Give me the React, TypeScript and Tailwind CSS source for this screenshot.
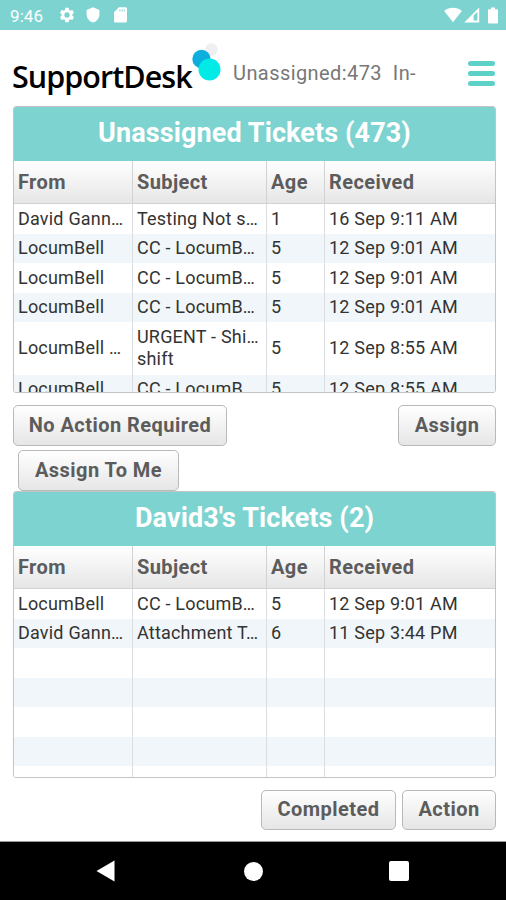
import React from 'react';

interface Ticket {
  from: string;
  subject: string;
  age: string;
  received: string;
  tall?: boolean;
}

const unassigned: Ticket[] = [
  { from: 'David Gann…', subject: 'Testing Not s…', age: '1', received: '16 Sep 9:11 AM' },
  { from: 'LocumBell', subject: 'CC - LocumB…', age: '5', received: '12 Sep 9:01 AM' },
  { from: 'LocumBell', subject: 'CC - LocumB…', age: '5', received: '12 Sep 9:01 AM' },
  { from: 'LocumBell', subject: 'CC - LocumB…', age: '5', received: '12 Sep 9:01 AM' },
  { from: 'LocumBell …', subject: 'URGENT - Shi…\nshift', age: '5', received: '12 Sep 8:55 AM', tall: true },
  { from: 'LocumBell', subject: 'CC - LocumB…', age: '5', received: '12 Sep 8:55 AM' },
];

const empty: Ticket = { from: '', subject: '', age: '', received: '' };

const mine: Ticket[] = [
  { from: 'LocumBell', subject: 'CC - LocumB…', age: '5', received: '12 Sep 9:01 AM' },
  { from: 'David Gann…', subject: 'Attachment T…', age: '6', received: '11 Sep 3:44 PM' },
  empty,
  empty,
  empty,
  empty,
  empty,
];

const columns = 'grid grid-cols-[119px_134px_58px_1fr]';

const StatusBar = () => (
  <div className="flex h-[30px] shrink-0 items-center bg-[#7dd3d0] pr-[8px] pl-[10px] text-white">
    <span className="mt-[2px] w-[48px] text-[17px] leading-none tracking-[0.1px]">9:46</span>
    <svg className="h-[18px] w-[18px]" viewBox="0 0 24 24" fill="currentColor">
      <path d="M19.14 12.94c.04-.3.06-.61.06-.94 0-.32-.02-.64-.07-.94l2.03-1.58a.49.49 0 0 0 .12-.61l-1.92-3.32a.488.488 0 0 0-.59-.22l-2.39.96c-.5-.38-1.03-.7-1.62-.94l-.36-2.54a.484.484 0 0 0-.48-.41h-3.84c-.24 0-.43.17-.47.41l-.36 2.54c-.59.24-1.13.57-1.62.94l-2.39-.96c-.22-.08-.47 0-.59.22L2.74 8.87c-.12.21-.08.47.12.61l2.03 1.58c-.05.3-.09.63-.09.94s.02.64.07.94l-2.03 1.58a.49.49 0 0 0-.12.61l1.92 3.32c.12.22.37.29.59.22l2.39-.96c.5.38 1.03.7 1.62.94l.36 2.54c.05.24.24.41.48.41h3.84c.24 0 .44-.17.47-.41l.36-2.54c.59-.24 1.13-.56 1.62-.94l2.39.96c.22.08.47 0 .59-.22l1.92-3.32c.12-.22.07-.47-.12-.61l-2.01-1.58zM12 15.6A3.6 3.6 0 1 1 12 8.4a3.6 3.6 0 0 1 0 7.2z" />
    </svg>
    <svg className="ml-[10px] h-[16px] w-[14px]" viewBox="0 0 14 16" fill="currentColor">
      <path d="M7 0.3 L13.4 2.9 V7.2 C13.4 11.2 10.8 14.4 7 15.6 C3.2 14.4 0.6 11.2 0.6 7.2 V2.9 Z" />
    </svg>
    <svg className="ml-[14px] h-[16px] w-[13px]" viewBox="0 0 13 16" fill="currentColor">
      <path
        fillRule="evenodd"
        d="M5 .3h6.6A1.4 1.4 0 0 1 13 1.7V14a1.5 1.5 0 0 1-1.5 1.500h-10A1.5 1.5 0 0 1 0 14V5.3zM5.400 2.600v1.800h1V2.600zM7.600 2.600v1.800h1V2.600zM9.800 2.600v1.800h1V2.600z"
      />
    </svg>
    <svg className="ml-auto h-[16px] w-[18px]" viewBox="0 0 18 16" fill="currentColor">
      <path d="M9 15.2 L0.2 4 C5 -0.3 13 -0.3 17.8 4 Z" />
    </svg>
    <svg className="ml-[2px] h-[16px] w-[16px]" viewBox="0 0 16 16" fill="currentColor">
      <path fillRule="evenodd" d="M15.2 0.4V15.400H0.2zM13.400 4.800L9.600 8.600V13.600H13.400z" />
    </svg>
    <svg className="ml-[8px] h-[17px] w-[10px]" viewBox="0 0 10 17" fill="currentColor">
      <path d="M3 0.5h4v1.800h2a1 1 0 0 1 1 1V15.500a1 1 0 0 1-1 1H1a1 1 0 0 1-1-1V3.300a1 1 0 0 1 1-1h2z" />
    </svg>
  </div>
);

const Header = () => (
  <header className="flex h-[76px] shrink-0 items-start">
    <div className="mt-[27px] ml-[12px] w-[180px] font-['Open_Sans',sans-serif] text-[30.5px] leading-[38px] font-semibold tracking-[-0.95px] whitespace-nowrap text-black">
      SupportDesk
    </div>
    <svg className="mt-[12px] h-[40px] w-[31px]" viewBox="0 0 31 40">
      <circle cx="19.5" cy="7.5" r="6.3" fill="#eeeff1" />
      <circle cx="9.5" cy="17" r="9.2" fill="#0baedd" />
      <circle cx="17.5" cy="27.5" r="11" fill="#00ebe6" />
    </svg>
    <div className="mt-[31px] ml-[10px] text-[20px] leading-6 tracking-[0.42px] whitespace-pre text-[#777777]">
      {'Unassigned:473  In-'}
    </div>
    <button className="mt-[31px] mr-[11px] ml-auto flex w-[27px] flex-col gap-[5.5px]" aria-label="Menu">
      <span className="h-[4.5px] w-full rounded-full bg-[#5bd1c8]" />
      <span className="h-[4.5px] w-full rounded-full bg-[#5bd1c8]" />
      <span className="h-[4.5px] w-full rounded-full bg-[#5bd1c8]" />
    </button>
  </header>
);

const TicketTable = ({ title, tickets }: { title: string; tickets: Ticket[] }) => (
  <section className="mr-[10px] ml-[13px] flex h-[287px] shrink-0 flex-col overflow-hidden rounded-[3px] border border-[#c4c4c4] bg-white">
    <h2 className="flex h-[54px] shrink-0 items-center justify-center bg-[#7dd3d0] pb-[2px] text-[27px] font-bold tracking-[0.1px] text-white">
      {title}
    </h2>
    <div className={`${columns} h-[43px] shrink-0 border-b border-[#d2d2d2] bg-linear-to-b from-white to-[#e6e6e6] text-[20px] font-bold tracking-[0.4px] text-[#5c5c5c]`}>
      {['From', 'Subject', 'Age', 'Received'].map((label) => (
        <div key={label} className="flex items-center border-r border-[#d2d2d2] pl-[4px] last:border-r-0">
          {label}
        </div>
      ))}
    </div>
    {tickets.map((ticket, index) => (
      <div
        key={index}
        className={`${columns} shrink-0 text-[18px] leading-[22px] tracking-[0.2px] text-[#333333] ${
          ticket.tall ? 'h-[52.5px]' : 'h-[29.5px]'
        } ${index % 2 ? 'bg-[#f0f6f9]' : 'bg-white'}`}
      >
        {[ticket.from, ticket.subject, ticket.age, ticket.received].map((value, cell) => (
          <div
            key={cell}
            className="flex items-center overflow-hidden border-r border-[#dcdfe1] pl-[4px] whitespace-pre last:border-r-0"
          >
            {value}
          </div>
        ))}
      </div>
    ))}
  </section>
);

const ActionButton = ({ label, className }: { label: string; className: string }) => (
  <button
    className={`flex items-center justify-center rounded-[5px] border border-[#b9b9b9] bg-linear-to-b from-white to-[#e6e6e6] pb-[2px] text-[20px] font-bold tracking-[0.45px] whitespace-nowrap text-[#5c5c5c] ${className}`}
  >
    {label}
  </button>
);

const NavBar = () => (
  <nav className="mt-auto flex h-[59px] shrink-0 items-center border-t border-[#999999] bg-black text-white">
    <svg className="ml-[96px] h-[22px] w-[19px]" viewBox="0 0 19 22" fill="currentColor">
      <path d="M18.5 0.5V21.500L0.5 11z" />
    </svg>
    <span className="ml-[129px] h-[19px] w-[19px] rounded-full bg-white" />
    <span className="ml-[126px] h-[20px] w-[20px] rounded-[2px] bg-white" />
  </nav>
);

export default function App() {
  return (
    <div className="flex h-[900px] w-[506px] flex-col overflow-hidden bg-white font-['Roboto',sans-serif]">
      <StatusBar />
      <Header />
      <TicketTable title="Unassigned Tickets (473)" tickets={unassigned} />
      <div className="mt-[12px] mr-[10px] ml-[13px] flex shrink-0 justify-between">
        <ActionButton label="No Action Required" className="h-[41px] w-[214px]" />
        <ActionButton label="Assign" className="h-[41px] w-[98px]" />
      </div>
      <div className="mt-[4px] ml-[18px] shrink-0">
        <ActionButton label="Assign To Me" className="h-[41px] w-[161px]" />
      </div>
      <TicketTable title="David3's Tickets (2)" tickets={mine} />
      <div className="mt-[12px] mr-[10px] flex shrink-0 justify-end gap-[6px]">
        <ActionButton label="Completed" className="h-[40px] w-[135px]" />
        <ActionButton label="Action" className="h-[40px] w-[94px]" />
      </div>
      <NavBar />
    </div>
  );
}
